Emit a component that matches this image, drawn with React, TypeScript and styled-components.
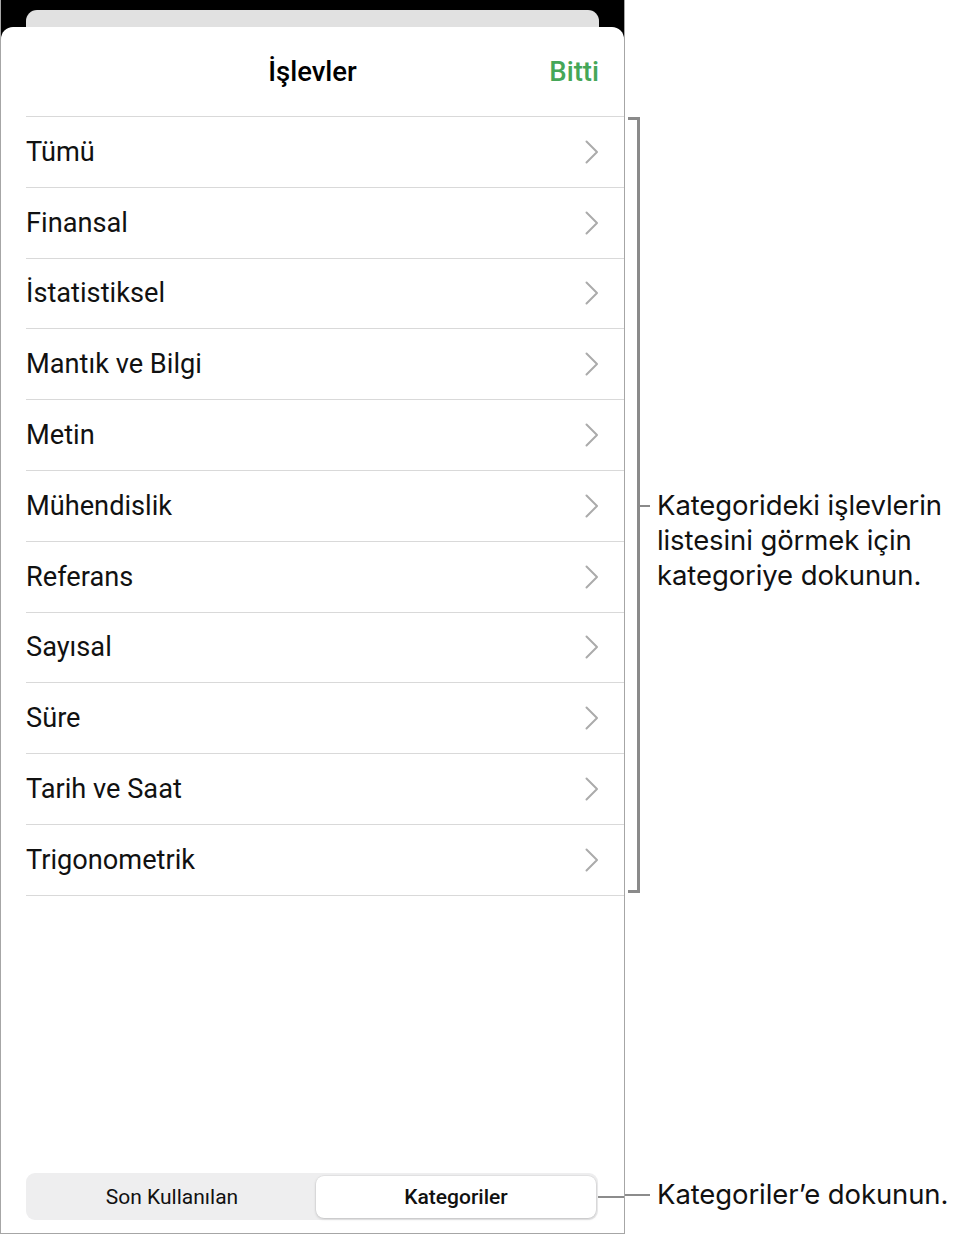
import React from "react";
import styled, { createGlobalStyle } from "styled-components";

const GlobalStyle = createGlobalStyle`
  html, body {
    margin: 0;
    padding: 0;
    background: #ffffff;
  }
  body {
    font-family: Roboto, "Liberation Sans", sans-serif;
    color: #000;
  }
`;

const Page = styled.div`
  display: flex;
  width: 959px;
  height: 1234px;
  overflow: hidden;
`;

const PanelFrame = styled.div`
  width: 625px;
  height: 1234px;
  box-sizing: border-box;
  display: flex;
  flex-direction: column;
  background: #000;
  border: 1px solid #a6a6a6;
  border-top: none;
  padding-top: 10px;
`;

const BackCard = styled.div`
  height: 17px;
  margin: 0 25px 0 25px;
  background: #e1e1e1;
  border-radius: 11px 11px 0 0;
`;

const Sheet = styled.div`
  flex: 1;
  display: flex;
  flex-direction: column;
  background: #fff;
  border-radius: 12px 12px 0 0;
`;

const Header = styled.div`
  height: 89px;
  display: grid;
  grid-template-columns: 1fr auto 1fr;
  align-items: center;
  padding: 0 25px 0 25px;
`;

const Title = styled.div`
  grid-column: 2;
  font-size: 27.5px;
  font-weight: 500;
`;

const Done = styled.div`
  grid-column: 3;
  justify-self: end;
  font-size: 27.5px;
  font-weight: 500;
  color: #45a758;
`;

const List = styled.div`
  margin-left: 25px;
  border-bottom: 1px solid #d9d9d9;
`;

const Row = styled.div`
  height: 70.8px;
  box-sizing: border-box;
  border-top: 1px solid #d9d9d9;
  display: flex;
  align-items: center;
  justify-content: space-between;
  padding-right: 25px;
`;

const RowLabel = styled.span`
  font-size: 27.2px;
  font-weight: 400;
  color: #111;
`;

const Spacer = styled.div`
  flex: 1;
`;

const BottomBar = styled.div`
  display: flex;
  align-items: center;
  padding: 0 0 13px 25px;
`;

const Segmented = styled.div`
  width: 572px;
  height: 47px;
  box-sizing: border-box;
  padding: 3px 2px 2px 2px;
  display: grid;
  grid-template-columns: 288px 1fr;
  background: #eeeeef;
  border-radius: 9px;
`;

const Segment = styled.div<{ $active?: boolean }>`
  display: flex;
  align-items: center;
  justify-content: center;
  font-size: 21px;
  font-weight: ${(p) => (p.$active ? 500 : 400)};
  color: #111;
  border-radius: 8px;
  background: ${(p) => (p.$active ? "#fff" : "transparent")};
  box-shadow: ${(p) =>
    p.$active ? "0 1px 3px rgba(0,0,0,0.18), 0 0 0 0.5px rgba(0,0,0,0.06)" : "none"};
`;

const Leader = styled.div<{ $w?: number }>`
  height: 2px;
  background: #8c8c8c;
  width: ${(p) => (p.$w ? `${p.$w}px` : "auto")};
  flex: ${(p) => (p.$w ? "none" : 1)};
`;

const Notes = styled.div`
  flex: 1;
  display: flex;
  flex-direction: column;
  padding-top: 117px;
`;

const BracketRow = styled.div`
  display: flex;
  align-items: flex-start;
  height: 776px;
`;

const Bracket = styled.div`
  width: 12px;
  height: 100%;
  box-sizing: border-box;
  margin-left: 3px;
  border: 3px solid #8a8a8a;
  border-left: none;
`;

const Callout = styled.div`
  display: flex;
  align-items: flex-start;
  margin-top: 371px;
`;

const Tick = styled.div`
  width: 10px;
  height: 2px;
  background: #8a8a8a;
  margin-top: 17px;
  margin-right: 7px;
`;

const NoteText = styled.div<{ $gap?: number }>`
  font-family: Inter, "Noto Sans", sans-serif;
  font-size: 27.5px;
  line-height: 35px;
  color: #111;
  letter-spacing: -0.1px;
  margin-left: ${(p) => p.$gap ?? 0}px;
`;

const BottomNote = styled.div`
  margin-top: auto;
  margin-bottom: 22px;
  display: flex;
  align-items: center;
`;

const Chevron = () => (
  <svg width="14" height="24" viewBox="0 0 14 24" fill="none">
    <path
      d="M1.5 1.5 L12 12 L1.5 22.5"
      stroke="#ababab"
      strokeWidth="2"
      strokeLinecap="round"
      strokeLinejoin="round"
    />
  </svg>
);

const categories = [
  "Tümü",
  "Finansal",
  "İstatistiksel",
  "Mantık ve Bilgi",
  "Metin",
  "Mühendislik",
  "Referans",
  "Sayısal",
  "Süre",
  "Tarih ve Saat",
  "Trigonometrik",
];

export default function App() {
  return (
    <>
      <GlobalStyle />
      <Page>
        <PanelFrame>
          <BackCard />
          <Sheet>
            <Header>
              <Title>İşlevler</Title>
              <Done>Bitti</Done>
            </Header>
            <List>
              {categories.map((c) => (
                <Row key={c}>
                  <RowLabel>{c}</RowLabel>
                  <Chevron />
                </Row>
              ))}
            </List>
            <Spacer />
            <BottomBar>
              <Segmented>
                <Segment>Son Kullanılan</Segment>
                <Segment $active>Kategoriler</Segment>
              </Segmented>
              <Leader />
            </BottomBar>
          </Sheet>
        </PanelFrame>
        <Notes>
          <BracketRow>
            <Bracket />
            <Callout>
              <Tick />
              <NoteText>
                Kategorideki işlevlerin
                <br />
                listesini görmek için
                <br />
                kategoriye dokunun.
              </NoteText>
            </Callout>
          </BracketRow>
          <BottomNote>
            <Leader $w={25} />
            <NoteText $gap={7}>Kategoriler’e dokunun.</NoteText>
          </BottomNote>
        </Notes>
      </Page>
    </>
  );
}
